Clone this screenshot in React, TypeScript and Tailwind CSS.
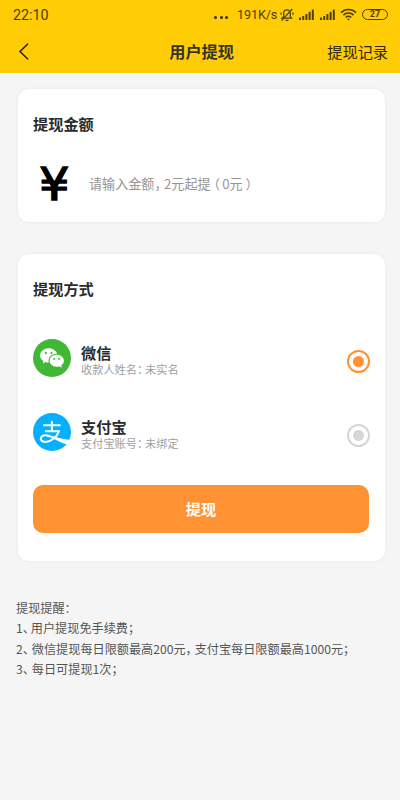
import React, { useState } from "react";
import { RiWechatFill } from "react-icons/ri";

interface MethodProps {
  icon: React.ReactNode;
  name: string;
  label: string;
  value: string;
  checked: boolean;
  onSelect: () => void;
}

// full width punctuation set at half width
function Mark({ children, className = "" }: { children: string; className?: string }) {
  return <span className={`[font-feature-settings:'halt'] ${className}`}>{children}</span>;
}

function Signal() {
  return (
    <svg width="16" height="11" viewBox="0 0 16 11" fill="#4d3d05">
      <rect x="0" y="8.6" width="2" height="2.4" />
      <rect x="3.2" y="7" width="2" height="4" />
      <rect x="6.4" y="5" width="2" height="6" />
      <rect x="9.6" y="2.8" width="2" height="8.2" />
      <rect x="12.8" y="0.6" width="2" height="10.4" />
    </svg>
  );
}

function AlipayIcon() {
  return (
    <svg width="38" height="38" viewBox="0 0 38 38" fill="none">
      <circle cx="19" cy="19" r="19" fill="#06b0fd" />
      <path
        d="M10.2 12.2h17.4M18.9 8v10.2M12 18.2h13.9C24.2 23.6 18.4 28.9 12.6 28.9c-4.2 0-5.5-2.3-4.6-4.3 1-2.3 4.6-2.9 8.9-1.6"
        stroke="#fff"
        strokeWidth="2"
      />
      <path d="M14 22c6 .2 13 4.6 24 4.7L35.4 32C27 30 21 24.8 14 23.8z" fill="#fff" />
    </svg>
  );
}

function StatusBar() {
  return (
    <div className="flex h-[29px] items-center pl-[13px] pr-3 text-[#4d3d05]">
      <span className="mt-0.5 font-[Roboto,sans-serif] text-[14.3px] leading-none">22:10</span>
      <div className="ml-auto flex items-center">
        <div className="mr-[9px] mt-1.5 flex gap-[2.5px]">
          <i className="h-[3px] w-[3px] rounded-full bg-[#33290a]" />
          <i className="h-[3px] w-[3px] rounded-full bg-[#33290a]" />
          <i className="h-[3px] w-[3px] rounded-full bg-[#33290a]" />
        </div>
        <span className="mt-0.5 w-[43px] whitespace-nowrap font-[Roboto,sans-serif] text-[12.6px] leading-none tracking-[-0.1px]">
          191K/s
        </span>
        <svg className="mr-[5px]" width="14" height="14" viewBox="0 0 14 14" fill="none" stroke="#4d3d05" strokeWidth="1.2">
          <path d="M2 10.2h9.6L10.3 8.5V5.2a3.3 3.3 0 0 0-6.6 0v3.3z" />
          <path d="M5.6 12.3h2.8M12.2 1 1.6 12.6M1 4.4v2.4M13 4.4v2.4" />
        </svg>
        <Signal />
        <span className="w-[5px]" />
        <Signal />
        <svg className="ml-1" width="17" height="13" viewBox="0 0 17 13" fill="none" stroke="#4d3d05" strokeWidth="1.7">
          <path d="M1 4.6a10.6 10.6 0 0 1 15 0M3.4 7.1a7.2 7.2 0 0 1 10.2 0M5.8 9.5a3.9 3.9 0 0 1 5.4 0" />
          <path d="M7 10.8 8.5 12.5 10 10.8z" fill="#4d3d05" stroke="none" />
        </svg>
        <span className="ml-[5px] flex h-[11px] w-[26px] items-center justify-center rounded-full border border-[#4d3d05] font-[Roboto,sans-serif] text-[9px] font-bold leading-none">
          27
        </span>
      </div>
    </div>
  );
}

function Method({ icon, name, label, value, checked, onSelect }: MethodProps) {
  return (
    <div className="flex h-[74px] cursor-pointer items-center" onClick={onSelect}>
      {icon}
      <div className="ml-2.5 mt-1">
        <p className="text-[15.2px] font-bold leading-[18px] text-[#2b2b2b]">{name}</p>
        <p className="text-[11.2px] leading-4 text-[#a0a0a0]">
          {label}
          <Mark className="mr-[2.5px]">：</Mark>
          {value}
        </p>
      </div>
      <span
        className={`-mr-px ml-auto mt-1.5 flex h-[23px] w-[23px] items-center justify-center rounded-full border-2 ${
          checked ? "border-[#ff9233]" : "border-[#d6d6d6]"
        }`}
      >
        <i className={`h-[11px] w-[11px] rounded-full ${checked ? "bg-[#ff9233]" : "bg-[#d6d6d6]"}`} />
      </span>
    </div>
  );
}

function App() {
  const [method, setMethod] = useState<string>("wechat");
  return (
    <div className="h-[800px] w-[400px] overflow-hidden bg-[#f5f5f5] font-['Noto_Sans_CJK_SC',sans-serif]">
      <header className="h-[73px] bg-[#ffcc05]">
        <StatusBar />
        <div className="flex h-[43px] items-center justify-between pl-[19px] pr-3">
          <svg className="mr-[47px] mt-px" width="10" height="17" viewBox="0 0 10 17" fill="none" stroke="#1f1a05" strokeWidth="1.4">
            <path d="M9 0.8 1 8.5 9 16.2" />
          </svg>
          <h1 className="text-[16.2px] font-bold leading-6 text-[#33332c]">用户提现</h1>
          <span className="text-[15.2px] leading-6 text-[#2e270c]">提现记录</span>
        </div>
      </header>

      <section className="ml-[17px] mt-[15px] h-[135px] w-[369px] rounded-xl border border-[#f0f0f0] bg-white px-[15px] pt-[23px] shadow-[0_0_2px_#ececec]">
        <h2 className="text-[15.2px] font-bold leading-[22px] text-[#2b2b2b]">提现金额</h2>
        <div className="mt-[26px] flex h-12 items-center">
          <span className="w-[56px] origin-left scale-x-105 pl-[6px] font-['DejaVu_Sans',sans-serif] text-[45px] leading-none text-black [-webkit-text-stroke:1.6px_black]">
            ¥
          </span>
          <span className="text-[13.1px] leading-5 text-[#959595]">
            请输入金额
            <Mark className="mr-[3px]">，</Mark>
            2元起提
            <Mark className="ml-[3px] mr-[2px]">（</Mark>
            0元
            <Mark className="ml-[3px]">）</Mark>
          </span>
        </div>
      </section>

      <section className="ml-[17px] mt-[30px] h-[309px] w-[369px] rounded-xl border border-[#f0f0f0] bg-white pl-[15px] pr-4 pt-[23px] shadow-[0_0_2px_#ececec]">
        <h2 className="text-[15.2px] font-bold leading-[22px] text-[#2b2b2b]">提现方式</h2>
        <div className="mt-[22px]">
          <Method
            icon={
              <span className="flex h-[38px] w-[38px] items-center justify-center rounded-full bg-[#41b835] text-white">
                <RiWechatFill size={26} />
              </span>
            }
            name="微信"
            label="收款人姓名"
            value="未实名"
            checked={method === "wechat"}
            onSelect={() => setMethod("wechat")}
          />
          <Method
            icon={<AlipayIcon />}
            name="支付宝"
            label="支付宝账号"
            value="未绑定"
            checked={method === "alipay"}
            onSelect={() => setMethod("alipay")}
          />
        </div>
        <button className="mt-4 h-12 w-full rounded-[10px] bg-[#ff9233] pb-0.5 text-[15.2px] font-bold text-white">
          提现
        </button>
      </section>

      <div className="ml-4 mt-9 whitespace-nowrap text-[12.15px] leading-[20.4px] text-[#555]">
        <p>
          提现提醒<Mark>：</Mark>
        </p>
        <p>
          1<Mark className="mr-[2px]">、</Mark>
          用户提现免手续费<Mark>；</Mark>
        </p>
        <p>
          2<Mark className="mr-[3px]">、</Mark>
          微信提现每日限额最高200元
          <Mark className="mr-[3px]">，</Mark>
          支付宝每日限额最高1000元<Mark>；</Mark>
        </p>
        <p>
          3<Mark className="mr-[3px]">、</Mark>
          每日可提现1次<Mark>；</Mark>
        </p>
      </div>
    </div>
  );
}

export default App;
